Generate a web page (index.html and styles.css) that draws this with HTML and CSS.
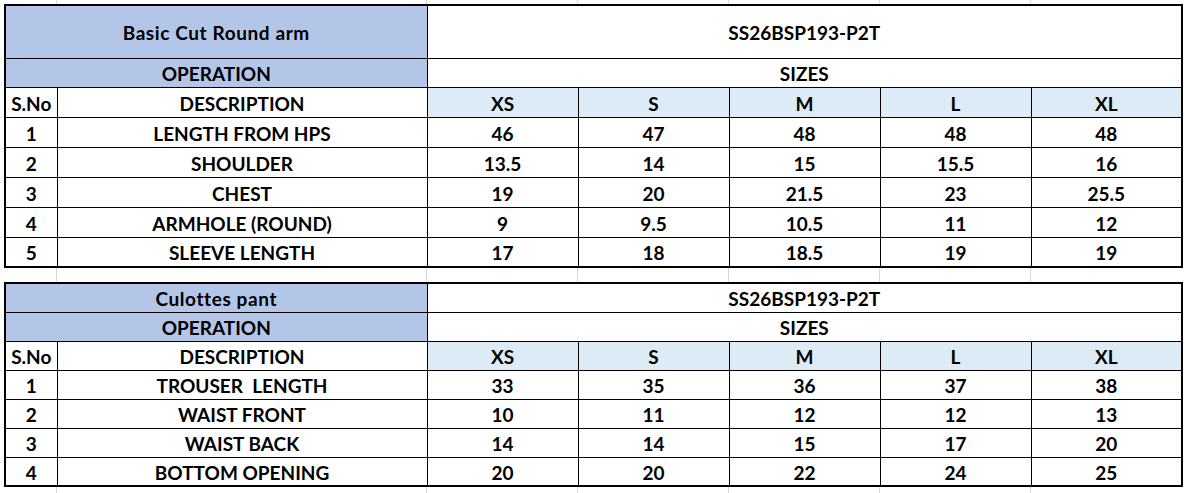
FILE: index.html
```html
<!DOCTYPE html>
<html>
<head>
<meta charset="utf-8">
<title>Size spec</title>
<link rel="stylesheet" href="styles.css">
</head>
<body>
<div class="sheet">
  <table class="spec">
    <colgroup>
      <col class="c-sno"><col class="c-desc"><col class="c-size"><col class="c-size"><col class="c-size"><col class="c-size"><col class="c-xl">
    </colgroup>
    <tr class="r-title-big">
      <td colspan="2" class="blue title">Basic Cut Round arm</td>
      <td colspan="5">SS26BSP193-P2T</td>
    </tr>
    <tr class="r29">
      <td colspan="2" class="blue">OPERATION</td>
      <td colspan="5">SIZES</td>
    </tr>
    <tr class="r30">
      <td>S.No</td><td>DESCRIPTION</td>
      <td class="light">XS</td><td class="light">S</td><td class="light">M</td><td class="light">L</td><td class="light">XL</td>
    </tr>
    <tr class="r30"><td>1</td><td>LENGTH FROM HPS</td><td>46</td><td>47</td><td>48</td><td>48</td><td>48</td></tr>
    <tr class="r30"><td>2</td><td>SHOULDER</td><td>13.5</td><td>14</td><td>15</td><td>15.5</td><td>16</td></tr>
    <tr class="r30"><td>3</td><td>CHEST</td><td>19</td><td>20</td><td>21.5</td><td>23</td><td>25.5</td></tr>
    <tr class="r30"><td>4</td><td>ARMHOLE (ROUND)</td><td>9</td><td>9.5</td><td>10.5</td><td>11</td><td>12</td></tr>
    <tr class="r30"><td>5</td><td>SLEEVE LENGTH</td><td>17</td><td>18</td><td>18.5</td><td>19</td><td>19</td></tr>
  </table>

  <div class="gap"></div>

  <table class="spec">
    <colgroup>
      <col class="c-sno"><col class="c-desc"><col class="c-size"><col class="c-size"><col class="c-size"><col class="c-size"><col class="c-xl">
    </colgroup>
    <tr class="r29">
      <td colspan="2" class="blue title">Culottes pant</td>
      <td colspan="5">SS26BSP193-P2T</td>
    </tr>
    <tr class="r29">
      <td colspan="2" class="blue">OPERATION</td>
      <td colspan="5">SIZES</td>
    </tr>
    <tr class="r29">
      <td>S.No</td><td>DESCRIPTION</td>
      <td class="light">XS</td><td class="light">S</td><td class="light">M</td><td class="light">L</td><td class="light">XL</td>
    </tr>
    <tr class="r29"><td>1</td><td>TROUSER&nbsp; LENGTH</td><td>33</td><td>35</td><td>36</td><td>37</td><td>38</td></tr>
    <tr class="r29"><td>2</td><td>WAIST FRONT</td><td>10</td><td>11</td><td>12</td><td>12</td><td>13</td></tr>
    <tr class="r29"><td>3</td><td>WAIST BACK</td><td>14</td><td>14</td><td>15</td><td>17</td><td>20</td></tr>
    <tr class="r29"><td>4</td><td>BOTTOM OPENING</td><td>20</td><td>20</td><td>22</td><td>24</td><td>25</td></tr>
  </table>
</div>
</body>
</html>
```
FILE: styles.css
```css
html, body {
  margin: 0;
  padding: 0;
}
body {
  width: 1185px;
  height: 493px;
  overflow: hidden;
  background-color: #ffffff;
  background-image:
    linear-gradient(to right, transparent 56px, #dadada 56px, #dadada 57px, transparent 57px),
    linear-gradient(to right, transparent 426px, #dadada 426px, #dadada 427px, transparent 427px),
    linear-gradient(to right, transparent 577px, #dadada 577px, #dadada 578px, transparent 578px),
    linear-gradient(to right, transparent 728px, #dadada 728px, #dadada 729px, transparent 729px),
    linear-gradient(to right, transparent 879px, #dadada 879px, #dadada 880px, transparent 880px),
    linear-gradient(to right, transparent 1030px, #dadada 1030px, #dadada 1031px, transparent 1031px);
  font-family: Lato, "Open Sans", "DejaVu Sans", sans-serif;
  color: #000;
}
.sheet {
  padding: 4px 0 0 4px;
}
.spec {
  border-collapse: collapse;
  table-layout: fixed;
  width: 1177px;
  border: 2px solid #000;
  background: #fff;
}
.c-sno { width: 52px; }
.c-desc { width: 370px; }
.c-size { width: 151px; }
.c-xl { width: 151px; }
.spec td {
  border: 1px solid #000;
  padding: 3px 0 0;
  text-align: center;
  vertical-align: middle;
  font-weight: 700;
  font-size: 19px;
  line-height: 20px;
  white-space: nowrap;
  overflow: hidden;
}
.spec td.title {
  letter-spacing: 0.6px;
}
.r-title-big { height: 53px; }
.r29 { height: 29px; }
.r30 { height: 30px; }
.blue { background: #b4c6e7; }
.light { background: #ddebf7; }
.gap {
  height: 14px;
}
```
